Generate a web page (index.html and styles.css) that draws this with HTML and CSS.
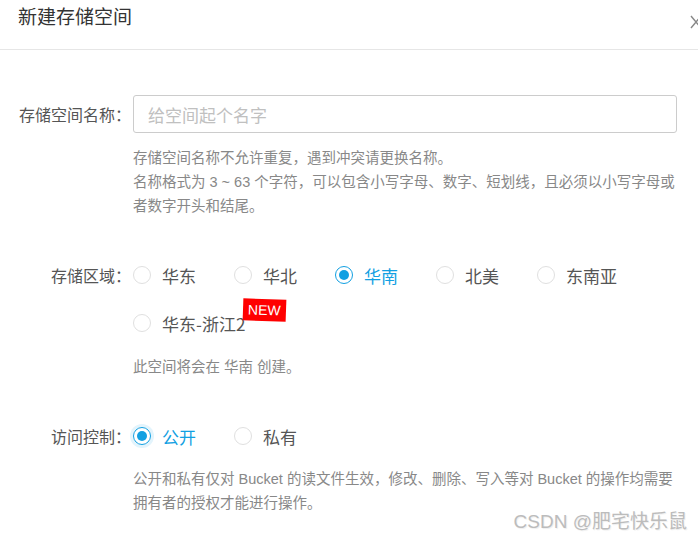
FILE: index.html
```html
<!DOCTYPE html>
<html lang="zh-CN">
<head>
    <meta charset="UTF-8">
    <meta name="viewport" content="width=device-width, initial-scale=1.0">
    <title>新建存储空间</title>
    <link rel="stylesheet" href="styles.css">
</head>
<body>
    <div class="dialog">
        <div class="dialog-header">
            <h2>新建存储空间</h2>
            <span class="close">
                <svg width="12" height="14" viewBox="0 0 12 14">
                    <path d="M1 1 L11 13 M11 1 L1 13" stroke="#888" stroke-width="1.4" fill="none"/>
                </svg>
            </span>
        </div>

        <div class="dialog-body">
            <div class="form-row">
                <label class="form-label label-input" for="bucket">存储空间名称：</label>
                <div class="form-field">
                    <input type="text" id="bucket" class="text-input" placeholder="给空间起个名字">
                    <p class="help help-name">存储空间名称不允许重复，遇到冲突请更换名称。<br>名称格式为 3 ~ 63 个字符，可以包含小写字母、数字、短划线，且必须以小写字母或<br>者数字开头和结尾。</p>
                </div>
            </div>

            <div class="form-row row-region">
                <span class="form-label">存储区域：</span>
                <div class="form-field">
                    <div class="options">
                        <label class="option"><span class="radio"></span><span class="option-text">华东</span></label>
                        <label class="option"><span class="radio"></span><span class="option-text">华北</span></label>
                        <label class="option checked"><span class="radio"></span><span class="option-text">华南</span></label>
                        <label class="option"><span class="radio"></span><span class="option-text">北美</span></label>
                        <label class="option"><span class="radio"></span><span class="option-text">东南亚</span></label>
                        <label class="option"><span class="radio"></span><span class="option-text">华东-浙江2<span class="badge-new">NEW</span></span></label>
                    </div>
                    <p class="help help-region">此空间将会在 华南 创建。</p>
                </div>
            </div>

            <div class="form-row row-access">
                <span class="form-label">访问控制：</span>
                <div class="form-field">
                    <div class="options">
                        <label class="option checked focused"><span class="radio"></span><span class="option-text">公开</span></label>
                        <label class="option"><span class="radio"></span><span class="option-text">私有</span></label>
                    </div>
                    <p class="help help-access">公开和私有仅对 Bucket 的读文件生效，修改、删除、写入等对 Bucket 的操作均需要<br>拥有者的授权才能进行操作。</p>
                </div>
            </div>
        </div>

        <div class="watermark">CSDN @肥宅快乐鼠</div>
    </div>
</body>
</html>
```

FILE: styles.css
```css
* {
    margin: 0;
    padding: 0;
    box-sizing: border-box;
}

body {
    font-family: "Noto Sans CJK SC", "Noto Sans", sans-serif;
    background-color: #fff;
    color: #555;
}

.dialog {
    position: relative;
    width: 698px;
    height: 538px;
    overflow: hidden;
}

.dialog-header {
    height: 50px;
    padding: 4px 0 0 18px;
    border-bottom: 1px solid #e6e6e6;
}

.dialog-header h2 {
    font-size: 19px;
    font-weight: normal;
    line-height: 24px;
    color: #333;
}

.close {
    position: absolute;
    top: 10px;
    left: 690px;
}

.dialog-body {
    padding-top: 45px;
}

.form-row {
    display: flex;
    align-items: flex-start;
}

.form-label {
    width: 131px;
    margin-right: 2px;
    flex-shrink: 0;
    text-align: right;
    font-size: 16px;
    line-height: 24px;
    color: #555;
    white-space: nowrap;
}

.label-input {
    line-height: 38px;
}

.form-field {
    width: 544px;
}

.text-input {
    display: block;
    width: 544px;
    height: 38px;
    padding: 0 14px;
    border: 1px solid #ccc;
    border-radius: 3px;
    font-family: inherit;
    font-size: 17px;
    color: #333;
    outline: none;
}

.text-input::placeholder {
    color: #c0c0c0;
}

.help {
    font-family: "Liberation Sans", "Noto Sans CJK SC", sans-serif;
    font-size: 14.5px;
    line-height: 24px;
    color: #888;
}

.help-name {
    margin-top: 13px;
}

.row-region {
    margin-top: 45px;
}

.options {
    display: flex;
    flex-wrap: wrap;
    row-gap: 24px;
}

.option {
    display: flex;
    align-items: center;
    width: 101px;
    height: 24px;
    font-size: 17px;
    color: #555;
}

.radio {
    position: relative;
    width: 18px;
    height: 18px;
    border: 1px solid #e0e0e0;
    border-radius: 50%;
    flex-shrink: 0;
}

.option-text {
    position: relative;
    margin-left: 11px;
    white-space: nowrap;
}

.checked .radio {
    border-color: #12a0e2;
}

.checked .radio::after {
    content: "";
    position: absolute;
    top: 3px;
    left: 3px;
    width: 10px;
    height: 10px;
    border-radius: 50%;
    background-color: #12a0e2;
}

.focused .radio {
    box-shadow: 0 0 0 3px #e3f4fc;
}

.checked .option-text {
    color: #12a0e2;
}

.badge-new {
    position: absolute;
    left: 81px;
    top: -12px;
    padding: 0 5px;
    background-color: #f00;
    color: #fff;
    font-family: "Liberation Sans", Arial, sans-serif;
    font-size: 14px;
    line-height: 22px;
    transform: rotate(2deg);
}

.help-region {
    margin-top: 20px;
}

.row-access {
    margin-top: 45px;
}

.help-access {
    margin-top: 19px;
}

.watermark {
    position: absolute;
    right: 11px;
    bottom: 5px;
    font-family: "Liberation Sans", "Noto Sans CJK SC", sans-serif;
    font-size: 19px;
    color: #bcbcbc;
    text-shadow: 1px 1px 1px #eee;
}
```
